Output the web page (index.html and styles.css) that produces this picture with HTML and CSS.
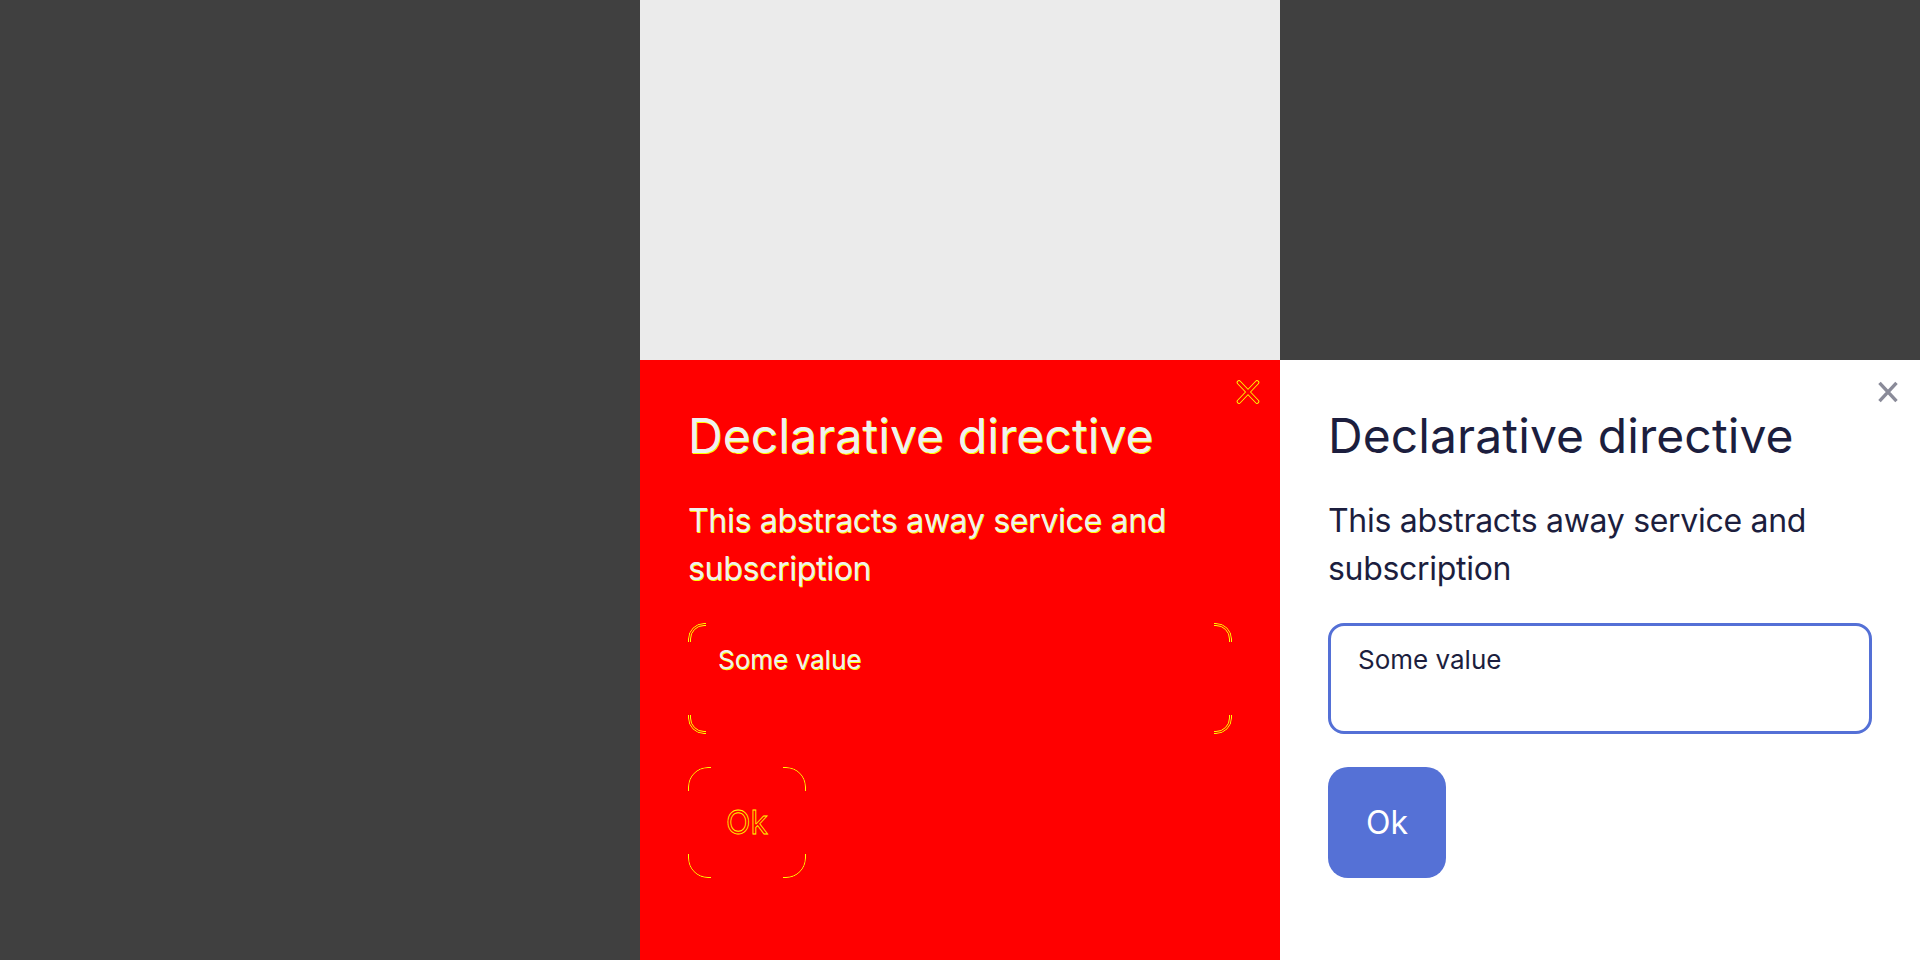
FILE: index.html
```html
<!DOCTYPE html>
<html lang="en">
<head>
<meta charset="utf-8">
<title>Declarative directive – visual diff</title>
<link rel="stylesheet" href="styles.css">
</head>
<body>
<main class="board">
  <div class="cell cell-dark cell-left"></div>
  <div class="cell cell-light"></div>
  <div class="cell cell-dark"></div>

  <section class="dialog dialog-diff">
    <button class="close" type="button" aria-label="Close">
      <svg viewBox="0 0 24 24" width="24" height="24" aria-hidden="true">
        <path d="M3 2.5 L21 21.5 M21 2.5 L3 21.5" fill="none" stroke="#ffff00" stroke-width="4.6" stroke-linecap="round"/>
        <path d="M3 2.5 L21 21.5 M21 2.5 L3 21.5" fill="none" stroke="#ff0000" stroke-width="2.8" stroke-linecap="round"/>
      </svg>
    </button>
    <h2 class="title">Declarative directive</h2>
    <p class="text">This abstracts away service and subscription</p>
    <div class="field"><span class="field-value">Some value</span></div>
    <button class="ok" type="button"><span class="ok-label">Ok</span></button>
  </section>

  <section class="dialog dialog-real">
    <button class="close" type="button" aria-label="Close">
      <svg viewBox="0 0 24 24" width="24" height="24" aria-hidden="true">
        <path d="M3.5 2.8 L20.5 21.2 M20.5 2.8 L3.5 21.2" fill="none" stroke="#8a8b99" stroke-width="3.4"/>
      </svg>
    </button>
    <h2 class="title">Declarative directive</h2>
    <p class="text">This abstracts away service and subscription</p>
    <div class="field"><span class="field-value">Some value</span></div>
    <button class="ok" type="button"><span class="ok-label">Ok</span></button>
  </section>
</main>
</body>
</html>
```

FILE: styles.css
```css
* {
  box-sizing: border-box;
}

html, body {
  margin: 0;
  padding: 0;
  background: #404040;
}

body {
  font-family: Inter, "Liberation Sans", sans-serif;
}

.board {
  width: 1920px;
  height: 960px;
  display: grid;
  grid-template-columns: 640px 640px 640px;
  grid-template-rows: 360px 600px;
  overflow: hidden;
}

.cell-dark {
  background: #404040;
}

.cell-left {
  grid-row: 1 / 3;
}

.cell-light {
  background: #ebebeb;
}

.dialog {
  position: relative;
  padding: 47px 48px 48px;
  display: flex;
  flex-direction: column;
  align-items: flex-start;
  gap: 32px;
}

.dialog-real {
  background: #ffffff;
  color: #1c1e3e;
}

.dialog-diff {
  background: #ff0000;
}

.close {
  position: absolute;
  top: 20px;
  right: 20px;
  width: 24px;
  height: 24px;
  padding: 0;
  margin: 0;
  border: 0;
  background: transparent;
  display: block;
}

.close svg {
  display: block;
}

.title {
  margin: 0;
  font-family: Inter, "Liberation Sans", sans-serif;
  font-size: 48px;
  line-height: 58px;
  font-weight: 400;
  letter-spacing: 0.1px;
}

.text {
  margin: 0;
  font-size: 32px;
  line-height: 48px;
  font-weight: 400;
  letter-spacing: -0.3px;
  width: 544px;
}

.field {
  position: relative;
  align-self: stretch;
  height: 111px;
  margin-top: -2px;
  border: 3px solid #5470d6;
  border-radius: 16px;
  padding: 18px 27px;
  font-family: Inter, "Liberation Sans", sans-serif;
  font-size: 26px;
  line-height: 31px;
}

.ok {
  position: relative;
  width: 118px;
  height: 111px;
  margin: 1px 0 0;
  padding: 0;
  border: 0;
  border-radius: 20px;
  background: #5571d6;
  color: #ffffff;
  font-family: Inter, "Liberation Sans", sans-serif;
  font-size: 32px;
  line-height: 39px;
  display: flex;
  align-items: center;
  justify-content: center;
}

/* ---- diff rendering ---- */

.dialog-diff .title,
.dialog-diff .text,
.dialog-diff .field-value {
  color: #f0f0f0;
  text-shadow: 0.5px 0.6px 0 #ffff00;
}

.dialog-diff .field {
  border-color: transparent;
}

.dialog-diff .field::before,
.dialog-diff .ok::before {
  content: "";
  position: absolute;
  pointer-events: none;
  -webkit-mask-image: linear-gradient(#000 0 0), linear-gradient(#000 0 0), linear-gradient(#000 0 0), linear-gradient(#000 0 0);
  mask-image: linear-gradient(#000 0 0), linear-gradient(#000 0 0), linear-gradient(#000 0 0), linear-gradient(#000 0 0);
  -webkit-mask-position: left top, right top, left bottom, right bottom;
  mask-position: left top, right top, left bottom, right bottom;
  -webkit-mask-repeat: no-repeat;
  mask-repeat: no-repeat;
}

.dialog-diff .field::before {
  inset: -3px;
  border: 3px double #ffff00;
  border-radius: 16px;
  -webkit-mask-size: 18px 19px;
  mask-size: 18px 19px;
}

.dialog-diff .ok {
  background: transparent;
}

.dialog-diff .ok::before {
  inset: 0;
  border: 1px solid #ffff00;
  border-radius: 20px;
  -webkit-mask-size: 23px 24px;
  mask-size: 23px 24px;
}

.dialog-diff .ok-label {
  color: #ff0000;
  -webkit-text-stroke: 0.8px #ffff00;
}
```
